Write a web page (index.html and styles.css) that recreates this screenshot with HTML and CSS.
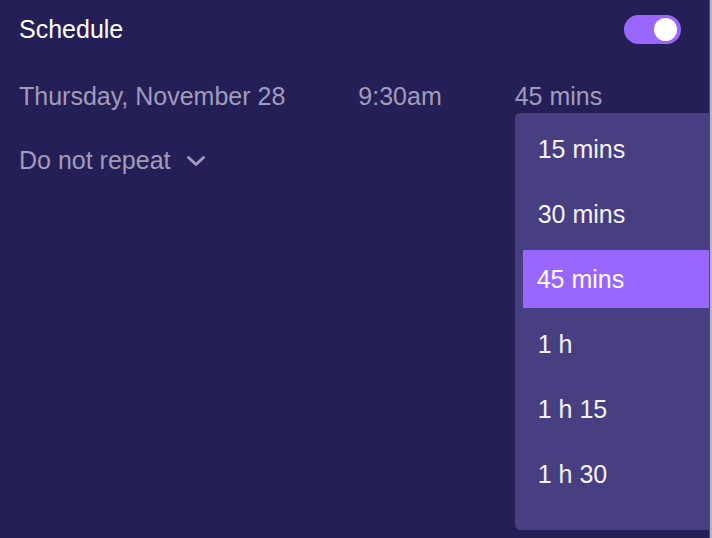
FILE: index.html
```html
<!DOCTYPE html>
<html lang="en">
<head>
<meta charset="utf-8">
<title>Schedule</title>
<link rel="stylesheet" href="styles.css">
</head>
<body>
<div class="frame">
  <div class="screen">
    <div class="header">
      <span class="title">Schedule</span>
      <span class="toggle"><span class="knob"></span></span>
    </div>
    <div class="when">
      <span class="field">Thursday, November 28</span>
      <span class="field">9:30am</span>
      <span class="field duration">45 mins
        <ul class="menu">
          <li class="item">15 mins</li>
          <li class="item">30 mins</li>
          <li class="item selected">45 mins</li>
          <li class="item">1 h</li>
          <li class="item">1 h 15</li>
          <li class="item">1 h 30</li>
        </ul>
      </span>
    </div>
    <div class="repeat">
      <span class="field">Do not repeat</span>
      <svg class="chevron" width="20" height="12" viewBox="0 0 20 12"><path d="M2.5 2.5 L10 9.5 L17.5 2.5" fill="none" stroke="#a09cba" stroke-width="3" stroke-linecap="round" stroke-linejoin="round"/></svg>
    </div>
  </div>
  <div class="edge"></div>
</div>
</body>
</html>
```

FILE: styles.css
```css
html, body {
  margin: 0;
  padding: 0;
  background: #251f57;
}
body {
  font-family: "Liberation Sans", Arial, sans-serif;
  font-size: 25px;
  line-height: 30px;
}
.frame {
  display: flex;
  width: 712px;
  height: 538px;
}
.screen {
  position: relative;
  width: 709px;
  height: 538px;
  overflow: hidden;
  padding-left: 19px;
  box-sizing: border-box;
}
.edge {
  width: 3px;
  height: 538px;
  background: linear-gradient(to right, #4d4874 0 1px, #b7b6c0 1px 3px);
}
.header {
  display: flex;
  align-items: center;
  justify-content: space-between;
  height: 58px;
  padding-right: 28px;
}
.title {
  color: #ffffff;
}
.toggle {
  display: flex;
  align-items: center;
  justify-content: flex-end;
  width: 57px;
  height: 29px;
  padding-right: 4px;
  box-sizing: border-box;
  border-radius: 15px;
  background: #9966ff;
}
.knob {
  width: 23px;
  height: 23px;
  border-radius: 50%;
  background: #ffffff;
}
.when {
  display: flex;
  gap: 73px;
  margin-top: 23px;
}
.field {
  color: #a09cba;
  white-space: nowrap;
}
.duration {
  position: relative;
}
.menu {
  position: absolute;
  top: 32px;
  left: 0;
  z-index: 2;
  width: 210px;
  height: 417px;
  margin: 0;
  padding: 7px 0 0;
  box-sizing: border-box;
  list-style: none;
  background: #483e82;
  border-radius: 5px;
  overflow: hidden;
  display: flex;
  flex-direction: column;
  gap: 7px;
}
.item {
  flex: none;
  height: 58px;
  line-height: 58px;
  margin: 0 16px 0 8px;
  padding-left: 15px;
  color: #f4f3fa;
}
.item.selected {
  background: #9966ff;
  padding-left: 14px;
  color: #ffffff;
}
.repeat {
  display: flex;
  align-items: center;
  gap: 15px;
  margin-top: 34px;
}
.chevron {
  display: block;
  margin-top: 1px;
}
```
